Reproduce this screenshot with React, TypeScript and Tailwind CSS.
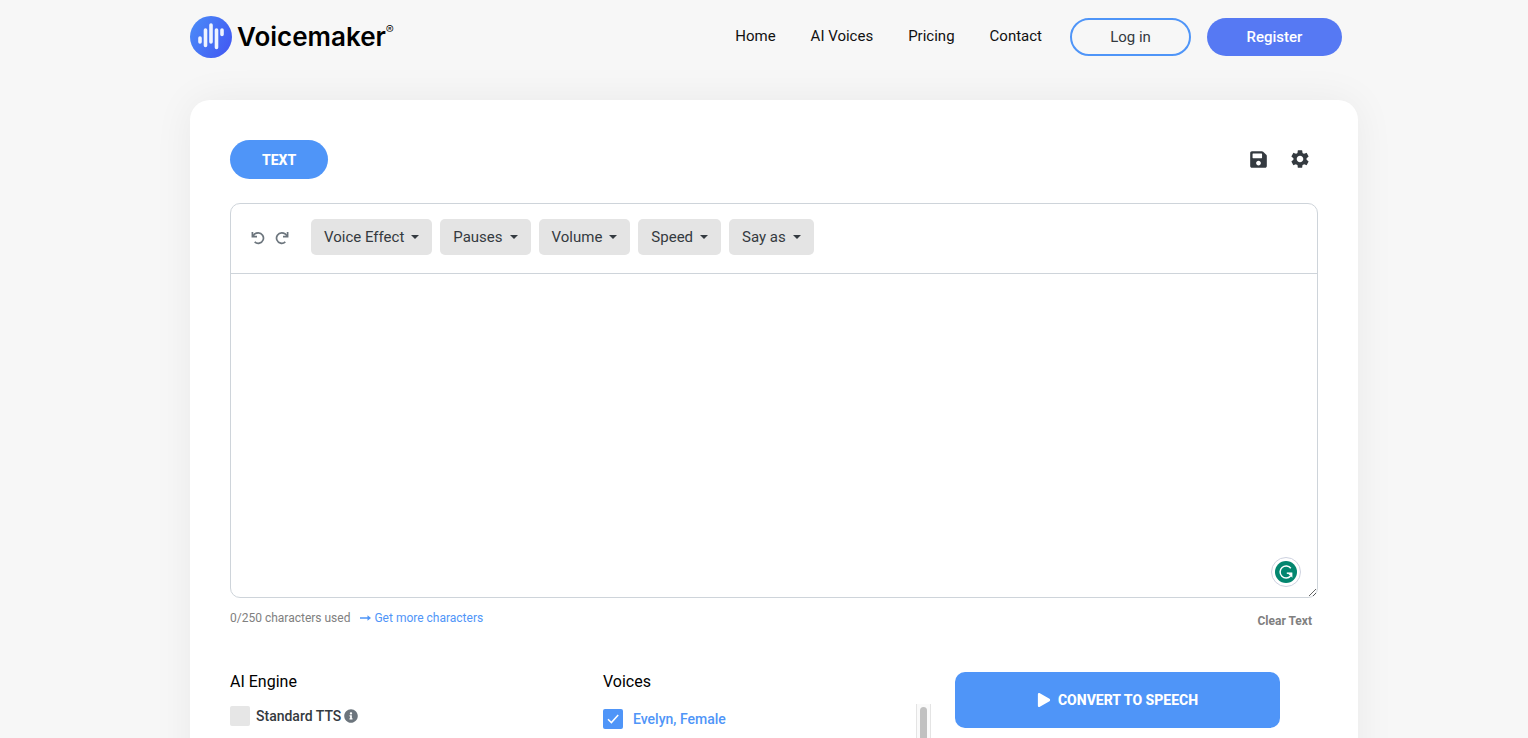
import { useState } from "react";
import { FaInfoCircle, FaPlay, FaSave } from "react-icons/fa";
import { MdSettings } from "react-icons/md";

const links = ["Home", "AI Voices", "Pricing", "Contact"];
const tools = ["Voice Effect", "Pauses", "Volume", "Speed", "Say as"];

export default function App() {
  const [text, setText] = useState("");

  return (
    <div className="flex min-h-screen flex-col overflow-hidden bg-[#f7f7f7] pl-5 font-[Roboto,sans-serif] text-[#343a40]">
      <Header />

      <main className="mx-auto -mb-16 flex w-full max-w-[1168px] grow flex-col rounded-[20px] bg-white px-10 pt-10 pb-16 shadow-[0_0_40px_rgba(0,0,0,0.06)]">
        <div className="flex items-center justify-between">
          <button className="h-[39px] rounded-full bg-[#4f95f8] px-8 text-sm font-extrabold text-white">
            TEXT
          </button>
          <div className="flex items-center gap-[21px] pr-[7px] pb-px">
            <button aria-label="Save">
              <FaSave size={19} />
            </button>
            <button aria-label="Settings">
              <MdSettings size={22} />
            </button>
          </div>
        </div>

        <Editor text={text} onChange={setText} />

        <div className="flex justify-between pt-3 text-xs">
          <div className="flex items-start gap-[10px]">
            <span className="text-[#808080]">{text.length}/250 characters used</span>
            <a href="#pricing" className="flex items-center gap-[3px] text-[#4f95f8]">
              <Arrow />
              Get more characters
            </a>
          </div>
          <button
            onClick={() => setText("")}
            className="mt-[3px] mr-[6px] font-bold text-[#808080]"
          >
            Clear Text
          </button>
        </div>

        <div className="flex grow justify-between pt-[43px] pr-[38px]">
          <section className="w-[373px]">
            <h2 className="text-base leading-5 text-black">AI Engine</h2>
            <label className="mt-[14px] flex items-center text-sm font-medium">
              <input
                type="checkbox"
                className="mr-[6px] size-5 appearance-none rounded-xs bg-[#e6e6e6]"
              />
              Standard TTS
              <FaInfoCircle size={14} className="ml-[3px] text-[#6c757d]" />
            </label>
          </section>

          <section className="flex grow flex-col">
            <h2 className="text-base leading-5 text-black">Voices</h2>
            <div className="mt-3 flex w-[328px] grow justify-between">
              <label className="mt-[5px] flex h-5 items-center text-sm font-medium text-[#4f95f8]">
                <span className="mr-[10px] grid size-5">
                  <input
                    type="checkbox"
                    defaultChecked
                    className="col-start-1 row-start-1 appearance-none rounded-xs bg-[#e6e6e6] checked:bg-[#4f95f8]"
                  />
                  <svg
                    viewBox="0 0 20 20"
                    className="pointer-events-none col-start-1 row-start-1 fill-none stroke-white stroke-[1.5]"
                  >
                    <path d="M5 10.2 8.4 13.6 15.2 6" />
                  </svg>
                </span>
                Evelyn, Female
              </label>
              <div className="w-[15px] border-x border-[#e4e4e4] bg-[#fafafa] px-[3px] pt-[3px]">
                <div className="h-full rounded-t bg-[#c1c1c1]" />
              </div>
            </div>
          </section>

          <button className="flex h-14 w-[325px] items-center justify-center gap-[7px] rounded-[10px] bg-[#4f95f8] text-sm font-extrabold text-white">
            <FaPlay size={14} />
            CONVERT TO SPEECH
          </button>
        </div>
      </main>
    </div>
  );
}

function Header() {
  return (
    <header className="mx-auto flex h-[100px] w-full max-w-[1168px] items-start justify-between pt-4 pr-4">
      <a href="#home" className="flex items-center gap-[5px] text-black">
        <Logo />
        <span className="flex font-[Inter,sans-serif] text-[26px] leading-[42px] font-semibold">
          Voicemaker
          <sup className="top-0 pt-2 text-xs leading-3 font-light">®</sup>
        </span>
      </a>

      <nav className="flex items-start pt-[2px] text-[15px]">
        <div className="mr-7 flex gap-[35px] leading-9 text-[#111]">
          {links.map((link) => (
            <a key={link} href="#nav">
              {link}
            </a>
          ))}
        </div>
        <button className="mr-4 h-[38px] w-[121px] rounded-full border-2 border-[#4f95f8]">
          Log in
        </button>
        <button className="h-[38px] w-[135px] rounded-full bg-[#5679f3] font-medium text-white">
          Register
        </button>
      </nav>
    </header>
  );
}

function Editor({ text, onChange }: { text: string; onChange: (value: string) => void }) {
  return (
    <div className="relative mt-6 rounded-[10px] border border-[#ced4da]">
      <div className="flex h-[70px] items-center border-b border-[#ced4da] pb-[3px] pl-5">
        <button aria-label="Undo" className="mr-[10px] pt-[2px]">
          <Turn />
        </button>
        <button aria-label="Redo" className="mr-[22px] -scale-x-100 pt-[2px]">
          <Turn />
        </button>
        <div className="flex gap-2">
          {tools.map((tool) => (
            <button
              key={tool}
              className="flex h-9 items-center gap-[7px] rounded-[5px] bg-[#e4e4e4] px-[13px] text-[15px]"
            >
              {tool}
              <span className="border-x-4 border-t-4 border-x-transparent border-t-[#343a40]" />
            </button>
          ))}
        </div>
      </div>
      <textarea
        aria-label="Text"
        maxLength={250}
        value={text}
        onChange={(e) => onChange(e.target.value)}
        className="block h-[323px] w-full resize-y rounded-b-[10px] p-5 outline-none"
      />
      <Grammarly />
    </div>
  );
}

function Logo() {
  return (
    <svg viewBox="0 0 42 42" className="size-[42px]">
      <defs>
        <linearGradient id="logo" x1="0" y1="0" x2="1" y2="0.5">
          <stop offset="0" stopColor="#4b8df8" />
          <stop offset="1" stopColor="#435ef3" />
        </linearGradient>
      </defs>
      <circle cx="21" cy="21" r="21" fill="url(#logo)" />
      <path
        d="M10 22v4M15.5 14v15.5M21 9v17M26.5 14v17.5M32 14v4.5"
        stroke="#eef3ff"
        strokeWidth="3.6"
        strokeLinecap="round"
      />
    </svg>
  );
}

function Turn() {
  return (
    <svg viewBox="0 0 14 14" className="size-[14px] fill-none stroke-[#6c757d] stroke-[1.7]">
      <path d="M1.4 1v4.6H6" />
      <path d="M2 5.2C3 3 5 1.9 7.3 1.9a5.2 5.2 0 1 1-3.6 9" />
    </svg>
  );
}

function Arrow() {
  return (
    <svg viewBox="0 0 11 6" className="h-[6px] w-[11px] fill-[#4f95f8]">
      <path d="M0 2.2h7.5V.3L11 3 7.5 5.7V3.8H0z" />
    </svg>
  );
}

function Grammarly() {
  return (
    <div className="absolute right-4 bottom-[10px] flex size-[30px] items-center justify-center rounded-full border border-[#ced2e0] bg-white">
      <svg viewBox="0 0 22 22" className="size-[22px] fill-none">
        <circle cx="11" cy="11" r="11" fill="#03866f" />
        <path d="M15.8 7.3A6 6 0 1 0 15.6 15" stroke="#fff" strokeWidth="1.5" />
        <path d="M11.8 12.2h5" stroke="#fff" strokeWidth="1.5" />
        <path d="M17.4 11.5v5.2l-4-3.6z" fill="#fff" />
      </svg>
    </div>
  );
}
